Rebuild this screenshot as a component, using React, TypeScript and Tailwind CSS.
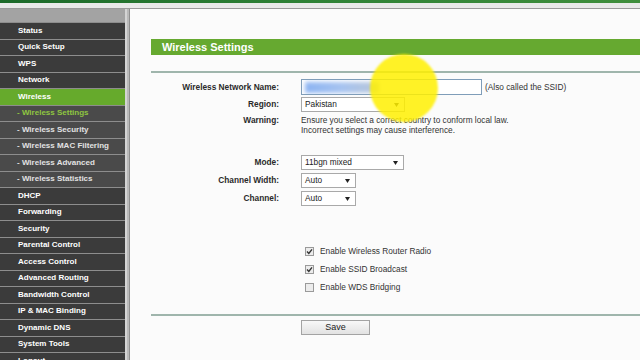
import React from 'react';

type MenuItem = { label: string; sub?: boolean; active?: boolean; current?: boolean };

const menu: MenuItem[] = [
  { label: 'Status' },
  { label: 'Quick Setup' },
  { label: 'WPS' },
  { label: 'Network' },
  { label: 'Wireless', active: true },
  { label: '- Wireless Settings', sub: true, current: true },
  { label: '- Wireless Security', sub: true },
  { label: '- Wireless MAC Filtering', sub: true },
  { label: '- Wireless Advanced', sub: true },
  { label: '- Wireless Statistics', sub: true },
  { label: 'DHCP' },
  { label: 'Forwarding' },
  { label: 'Security' },
  { label: 'Parental Control' },
  { label: 'Access Control' },
  { label: 'Advanced Routing' },
  { label: 'Bandwidth Control' },
  { label: 'IP & MAC Binding' },
  { label: 'Dynamic DNS' },
  { label: 'System Tools' },
  { label: 'Logout' },
];

function Sidebar() {
  return (
    <div className="w-[125px] shrink-0 flex flex-col">
      <div className="h-[14px] bg-[#a3a3a3] border-b border-[#8d8d8d]" />
      {menu.map((m) => {
        const bg = m.active ? 'bg-[#66aa2c]' : m.sub ? 'bg-[#4a4a4a]' : 'bg-[#3b3b3b]';
        const color = m.current ? 'text-[#8fc640]' : m.sub ? 'text-[#e2e2e2]' : 'text-white';
        return (
          <div
            key={m.label}
            className={`h-[16.5px] shrink-0 flex items-center border-b border-[#8d8d8d] font-bold text-[8px] whitespace-nowrap ${bg} ${color} ${m.sub ? 'pl-[17px]' : 'pl-[18px]'}`}
          >
            {m.label}
          </div>
        );
      })}
    </div>
  );
}

function Select({ value, width }: { value: string; width: string }) {
  return (
    <div className={`h-[15px] ${width} bg-white border border-[#a9a9a9] flex items-center justify-between pl-[3px] pr-[5px] text-[8.3px] text-[#222]`}>
      <span>{value}</span>
      <svg width="5" height="4" viewBox="0 0 5 4">
        <path d="M0 0 L5 0 L2.5 4 Z" fill="#222" />
      </svg>
    </div>
  );
}

function Row({ label, children, className = '' }: { label: string; children: React.ReactNode; className?: string }) {
  return (
    <div className={`flex items-center ${className}`}>
      <div className="w-[128px] text-right font-bold text-[8.3px] text-[#2a2a2a]">{label}</div>
      <div className="ml-[22px] flex items-center">{children}</div>
    </div>
  );
}

function Check({ checked, label }: { checked: boolean; label: string }) {
  return (
    <div className="flex items-center h-[18px] ml-[154px]">
      <div className="w-[9px] h-[9px] border border-[#9a9a9a] bg-[#ececec] flex items-center justify-center">
        {checked && (
          <svg width="7" height="7" viewBox="0 0 7 7">
            <path d="M1 3.6 L2.8 5.4 L6 1.4" stroke="#333" strokeWidth="1.4" fill="none" />
          </svg>
        )}
      </div>
      <span className="ml-[6px] text-[8.3px] text-[#333]">{label}</span>
    </div>
  );
}

export default function App() {
  return (
    <div className="relative w-[640px] h-[360px] overflow-hidden bg-[#fbfbfb] font-['Liberation_Sans',Arial,sans-serif]">
      <div className="h-[3px] bg-gradient-to-r from-[#1c6a2a] via-[#2f8236] to-[#3f8e3c]" />
      <div className="h-[5px] bg-[#e9e9e9]" />
      <div className="h-[1px] bg-[#9a9a9a]" />
      <div className="flex">
        <Sidebar />
        <div className="w-[5px] shrink-0 bg-[#b9b9b9] border-l-2 border-[#d4d4d4] border-r border-r-[#8f8f8f] h-[360px]" />
        <div className="flex-1 pl-[21px] pt-[30px]">
          <div className="h-[16px] bg-[#66a930] flex items-center pl-[11px] text-white font-bold text-[11px]">
            Wireless Settings
          </div>
          <div className="mt-[16px] h-[2px] bg-[#9fb5ac]" />

          <Row label="Wireless Network Name:" className="mt-[6px]">
            <div className="relative h-[16px] w-[181px] bg-white border border-[#7f9db9] overflow-hidden">
              <div className="absolute left-[3px] top-[2px] h-[11px] w-[74px] bg-gradient-to-r from-[#8db4f2] via-[#a6c3f0] to-[#b9c6d8] blur-[2px]" />
            </div>
            <span className="ml-[3px] text-[8.3px] text-[#333]">(Also called the SSID)</span>
          </Row>
          <Row label="Region:" className="mt-[2px]">
            <Select value="Pakistan" width="w-[104px]" />
          </Row>
          <div className="flex mt-[3px]">
            <div className="w-[128px] text-right font-bold text-[8.3px] text-[#2a2a2a] leading-[10px]">Warning:</div>
            <div className="ml-[22px] text-[8.3px] text-[#333] leading-[10px]">
              <div>Ensure you select a correct country to conform local law.</div>
              <div>Incorrect settings may cause interference.</div>
            </div>
          </div>

          <Row label="Mode:" className="mt-[20px]">
            <Select value="11bgn mixed" width="w-[103px]" />
          </Row>
          <Row label="Channel Width:" className="mt-[3px]">
            <Select value="Auto" width="w-[55px]" />
          </Row>
          <Row label="Channel:" className="mt-[3px]">
            <Select value="Auto" width="w-[55px]" />
          </Row>

          <div className="mt-[36px] flex flex-col">
            <Check checked label="Enable Wireless Router Radio" />
            <Check checked label="Enable SSID Broadcast" />
            <Check checked={false} label="Enable WDS Bridging" />
          </div>

          <div className="mt-[18px] h-[2px] bg-[#9fb5ac]" />
          <div className="mt-[4px] ml-[150px] w-[69px] h-[15px] border border-[#a3a3a3] bg-gradient-to-b from-[#f8f8f8] to-[#e2e2e2] flex items-center justify-center text-[9px] text-[#222]">
            Save
          </div>
        </div>
      </div>
      <div className="absolute left-[370px] top-[54px] w-[68px] h-[68px] rounded-full bg-[#fff000]/85 blur-[1px] pointer-events-none" />
    </div>
  );
}
